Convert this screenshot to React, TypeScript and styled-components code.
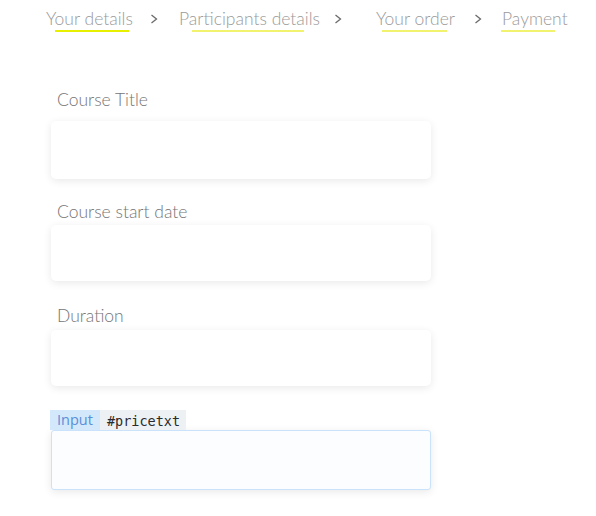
import React from "react";
import styled, { createGlobalStyle } from "styled-components";

const Global = createGlobalStyle`
  html, body { margin: 0; padding: 0; background: #ffffff; }
  body { font-family: Lato, "Open Sans", sans-serif; }
`;

const Page = styled.div`
  width: 596px;
  height: 516px;
  overflow: hidden;
  background: #fff;
`;

const Steps = styled.nav`
  display: grid;
  grid-template-columns: 104px 29px 155px 42px 98px 28px auto;
  align-items: start;
  padding: 8px 0 0 46px;
  height: 38px;
  box-sizing: border-box;
`;

const Step = styled.div`
  display: flex;
  flex-direction: column;
`;

const StepText = styled.span`
  font-family: Lato, sans-serif;
  font-weight: 300;
  font-size: 17.5px;
  line-height: 22px;
  color: #9a9a9a;
  white-space: nowrap;
`;

const Underline = styled.span<{ $left: number; $width: number; $active?: boolean }>`
  display: block;
  margin-top: 0;
  margin-left: ${(p) => p.$left}px;
  width: ${(p) => p.$width}px;
  height: 2px;
  background: ${(p) => (p.$active ? "#e6f000" : "#f1f36e")};
`;

const Chevron = styled.svg`
  width: 8px;
  height: 10px;
  margin-top: 6px;
`;

const Form = styled.div`
  display: flex;
  flex-direction: column;
  width: 380px;
  margin: 50px 0 0 51px;
`;

const Field = styled.div<{ $top: number }>`
  position: relative;
  display: flex;
  flex-direction: column;
  margin-top: ${(p) => p.$top}px;
`;

const Label = styled.label`
  font-family: Lato, sans-serif;
  font-weight: 300;
  font-size: 17.5px;
  line-height: 24px;
  color: #757575;
  padding-left: 6px;
`;

const Box = styled.div<{ $gap: number; $height: number; $focused?: boolean }>`
  margin-top: ${(p) => p.$gap}px;
  height: ${(p) => p.$height}px;
  box-sizing: border-box;
  border-radius: ${(p) => (p.$focused ? 3 : 5)}px;
  background: ${(p) => (p.$focused ? "#fbfdff" : "#ffffff")};
  border: ${(p) => (p.$focused ? "1px solid #cbe3fa" : "none")};
  box-shadow: 0 2px 9px rgba(0, 0, 0, 0.09);
`;

const Tag = styled.div`
  position: absolute;
  left: -1px;
  top: 3px;
  display: flex;
  height: 20px;
`;

const TagKind = styled.span`
  background: #d4e8fb;
  color: #5a8fd8;
  font-family: "Open Sans", sans-serif;
  font-size: 14.5px;
  line-height: 20px;
  padding: 0 7px;
`;

const TagId = styled.span`
  background: #eef1f4;
  color: #2b2b2b;
  font-family: "DejaVu Sans Mono", monospace;
  font-size: 13.5px;
  line-height: 22px;
  padding: 0 6px 0 7px;
`;

const steps = [
  { text: "Your details", left: 9, width: 74, active: true },
  { text: "Participants details", left: 13, width: 112 },
  { text: "Your order", left: 6, width: 65 },
  { text: "Payment", left: -1, width: 54 },
];

const Arrow = () => (
  <Chevron viewBox="0 0 8 10">
    <polyline points="1.5,1 6.5,5 1.5,9" fill="none" stroke="#6a6a6a" strokeWidth="1.3" />
  </Chevron>
);

const fields = [
  { label: "Course Title", top: 0, gap: 9, height: 58 },
  { label: "Course start date", top: 21, gap: 1, height: 56 },
  { label: "Duration", top: 23, gap: 2, height: 56 },
];

export default function App() {
  return (
    <Page>
      <Global />
      <Steps>
        {steps.map((s, i) => (
          <React.Fragment key={s.text}>
            <Step>
              <StepText>{s.text}</StepText>
              <Underline $left={s.left} $width={s.width} $active={s.active} />
            </Step>
            {i < steps.length - 1 && <Arrow />}
          </React.Fragment>
        ))}
      </Steps>
      <Form>
        {fields.map((f) => (
          <Field key={f.label} $top={f.top}>
            <Label>{f.label}</Label>
            <Box $gap={f.gap} $height={f.height} />
          </Field>
        ))}
        <Field $top={21}>
          <Label>Price</Label>
          <Box $gap={-1} $height={60} $focused />
          <Tag>
            <TagKind>Input</TagKind>
            <TagId>#pricetxt</TagId>
          </Tag>
        </Field>
      </Form>
    </Page>
  );
}
